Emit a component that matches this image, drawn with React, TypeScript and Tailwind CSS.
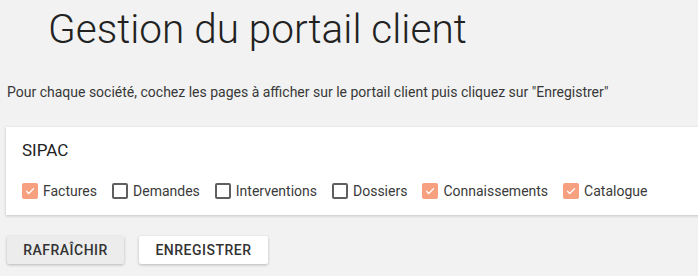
import React, { useState } from "react";

const pages = [
  { label: "Factures", checked: true },
  { label: "Demandes", checked: false },
  { label: "Interventions", checked: false },
  { label: "Dossiers", checked: false },
  { label: "Connaissements", checked: true },
  { label: "Catalogue", checked: true },
];

const Checkbox = ({ label, initial }: { label: string; initial: boolean }) => {
  const [checked, setChecked] = useState(initial);
  return (
    <label
      className="flex items-center gap-[5px] cursor-pointer"
      onClick={() => setChecked(!checked)}
    >
      {checked ? (
        <span className="flex h-4 w-4 items-center justify-center rounded-[2px] bg-[#f7a07f]">
          <svg width="12" height="12" viewBox="0 0 24 24" fill="none">
            <path
              d="M5 12.5l4.5 4.5L19 7.5"
              stroke="white"
              strokeWidth="2.6"
              strokeLinecap="round"
              strokeLinejoin="round"
            />
          </svg>
        </span>
      ) : (
        <span className="h-4 w-4 rounded-[2px] border-2 border-[#5f5f5f] bg-white" />
      )}
      <span className="text-sm text-[#3a3a3a]">{label}</span>
    </label>
  );
};

export default function App() {
  return (
    <div
      className="h-[276px] w-[698px] overflow-hidden bg-[#f2f2f2]"
      style={{ fontFamily: "Roboto, 'Liberation Sans', sans-serif" }}
    >
      {/* titre */}
      <h1 className="pl-[48px] pt-[4px] text-[40.5px] font-light leading-[50px] text-[#222]">
        Gestion du portail client
      </h1>

      <p className="mt-[30px] pl-[7px] text-[14px] leading-4 text-[#383838]">
        Pour chaque société, cochez les pages à afficher sur le portail client puis cliquez sur "Enregistrer"
      </p>

      {/* carte société */}
      <div className="ml-[6px] mt-[27px] h-[88px] w-[720px] bg-white pl-4 pt-[11px] shadow-[0_1px_3px_rgba(0,0,0,0.2)]">
        <div className="text-[17px] leading-6 text-[#222]">SIPAC</div>
        <div className="mt-[19px] flex items-center gap-[15px]">
          {pages.map((p) => (
            <Checkbox key={p.label} label={p.label} initial={p.checked} />
          ))}
        </div>
      </div>

      {/* boutons */}
      <div className="mt-[21px] flex gap-[15px] pl-[7px]">
        <button className="h-[28px] w-[117px] rounded-[2px] bg-[#ececec] text-sm font-medium tracking-[0.5px] text-[#333] shadow-[0_1px_3px_rgba(0,0,0,0.25)]">
          RAFRAÎCHIR
        </button>
        <button className="h-[28px] w-[129px] rounded-[2px] bg-white text-sm font-medium tracking-[0.5px] text-[#333] shadow-[0_1px_3px_rgba(0,0,0,0.25)]">
          ENREGISTRER
        </button>
      </div>
    </div>
  );
}
